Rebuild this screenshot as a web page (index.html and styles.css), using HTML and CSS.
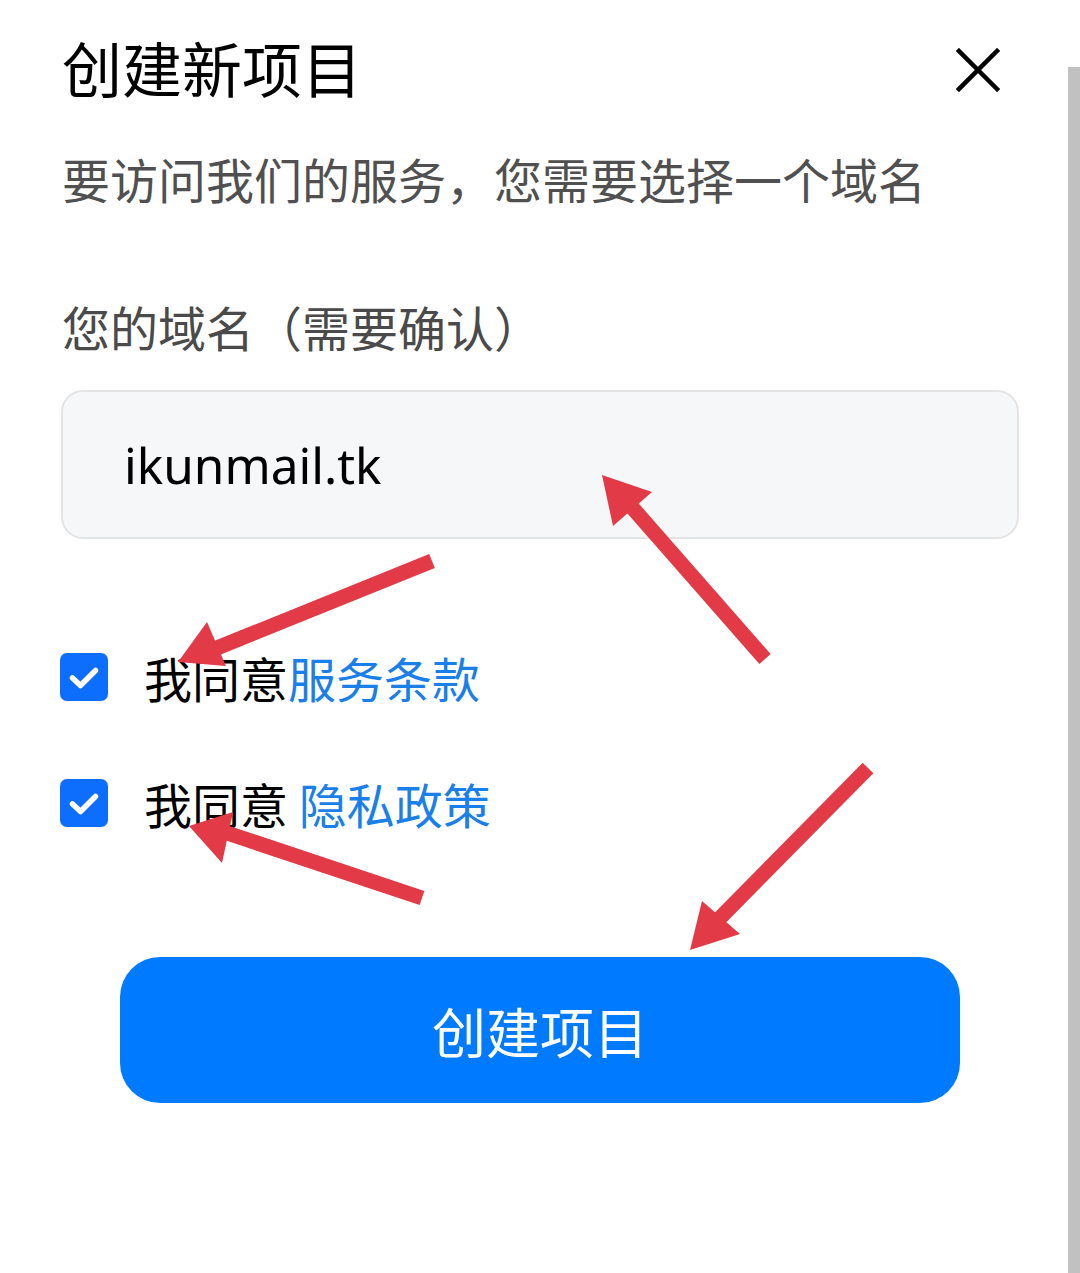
FILE: index.html
```html
<!DOCTYPE html>
<html lang="zh-CN">
<head>
<meta charset="utf-8">
<title>创建新项目</title>
<link rel="stylesheet" href="styles.css">
</head>
<body>
<div class="page">
  <div class="header">
    <h1 class="title">创建新项目</h1>
    <svg class="close" viewBox="0 0 44 44" width="44" height="44">
      <path d="M3 3 L41 41 M41 3 L3 41" stroke="#000" stroke-width="4.5" stroke-linecap="square" fill="none"/>
    </svg>
  </div>
  <p class="subtitle">要访问我们的服务，您需要选择一个域名</p>
  <p class="label">您的域名（需要确认）</p>
  <div class="input">ikunmail.tk</div>
  <div class="check-row first">
    <span class="checkbox"><svg viewBox="0 0 48 48" width="48" height="48"><path d="M12.5 25 L20.5 32.5 L35.5 17.5" stroke="#fff" stroke-width="5.5" stroke-linecap="round" stroke-linejoin="round" fill="none"/></svg></span>
    <span class="check-text">我同意<span class="link">服务条款</span></span>
  </div>
  <div class="check-row second">
    <span class="checkbox"><svg viewBox="0 0 48 48" width="48" height="48"><path d="M12.5 25 L20.5 32.5 L35.5 17.5" stroke="#fff" stroke-width="5.5" stroke-linecap="round" stroke-linejoin="round" fill="none"/></svg></span>
    <span class="check-text">我同意 <span class="link">隐私政策</span></span>
  </div>
  <button class="create">创建项目</button>
</div>
<div class="scrollbar"></div>
<svg class="arrows" viewBox="0 0 1080 1273" width="1080" height="1273">
  <g stroke="#e23a47" stroke-width="15" fill="#e23a47">
    <line x1="432" y1="561" x2="212" y2="650"/>
    <polygon stroke="none" points="178,662 207,622 226,666"/>
    <line x1="765" y1="659" x2="630" y2="505"/>
    <polygon stroke="none" points="602,475 652,492 613,526"/>
    <line x1="868" y1="768" x2="718" y2="920"/>
    <polygon stroke="none" points="690,950 702,901 740,934"/>
    <line x1="422" y1="898" x2="224" y2="832"/>
    <polygon stroke="none" points="189,826 233,812 222,863"/>
  </g>
</svg>
</body>
</html>
```
FILE: styles.css
```css
html, body {
  margin: 0;
  padding: 0;
  background: #ffffff;
}
body {
  width: 1080px;
  height: 1273px;
  overflow: hidden;
  position: relative;
  font-family: "Noto Sans CJK SC", "Noto Sans", sans-serif;
}
.page {
  padding: 37px 61px 0 62px;
}
.header {
  display: flex;
  align-items: center;
  justify-content: space-between;
  height: 60px;
}
.title {
  margin: 0;
  font-size: 60px;
  line-height: 60px;
  font-weight: 400;
  color: #000;
}
.close {
  display: block;
  margin-right: 19px;
  margin-top: 6px;
}
.subtitle {
  margin: 51px 0 0;
  font-size: 48px;
  line-height: 60px;
  color: #505050;
  font-weight: 400;
}
.label {
  margin: 88px 0 0;
  font-size: 48px;
  line-height: 60px;
  color: #4a4a4a;
}
.input {
  margin: 34px 0 0 -1px;
  box-sizing: border-box;
  height: 149px;
  border: 2px solid #e3e4e6;
  border-radius: 22px;
  background: #f6f7f9;
  display: flex;
  align-items: center;
  padding-left: 61px;
  font-family: "Noto Sans", "Open Sans", sans-serif;
  font-size: 49.5px;
  color: #000;
}
.check-row {
  display: flex;
  align-items: center;
  height: 48px;
  margin-left: -2px;
}
.check-row.first { margin-top: 114px; }
.check-row.second { margin-top: 78px; }
.checkbox {
  width: 48px;
  height: 48px;
  border-radius: 7px;
  background: #0d6efd;
  display: flex;
  align-items: center;
  justify-content: center;
  flex: none;
}
.checkbox svg { display: block; }
.check-text {
  margin-left: 36px;
  font-size: 48px;
  line-height: 60px;
  color: #000;
  white-space: pre;
}
.link {
  color: #1a7fe8;
}
.create {
  display: flex;
  align-items: center;
  justify-content: center;
  width: 840px;
  height: 146px;
  margin: 130px 0 0 58px;
  border: none;
  border-radius: 40px;
  background: #007bff;
  color: #fff;
  font-family: "Noto Sans CJK SC", sans-serif;
  font-size: 54px;
  padding: 0;
}
.scrollbar {
  position: absolute;
  right: 0;
  top: 67px;
  bottom: 0;
  width: 12px;
  background: #c1c1c1;
}
.arrows {
  position: absolute;
  left: 0;
  top: 0;
  pointer-events: none;
}
```
